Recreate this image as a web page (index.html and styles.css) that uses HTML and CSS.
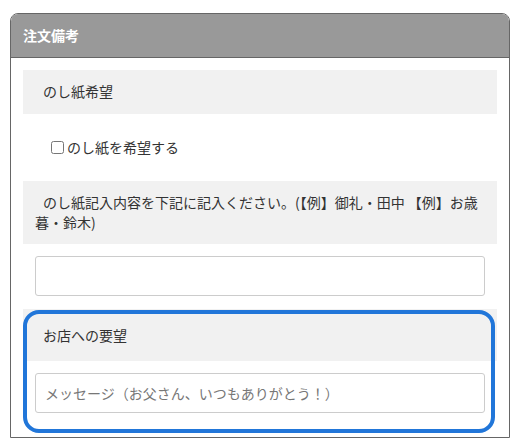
FILE: index.html
```html
<!DOCTYPE html>
<html lang="ja">
<head>
    <meta charset="UTF-8">
    <title>注文備考</title>
    <link rel="stylesheet" href="styles.css">
</head>
<body>
    <div class="order-note">
        <div class="note-header">注文備考</div>

        <div class="note-body">
            <!-- のし紙 -->
            <div class="note-section">
                <div class="note-label">のし紙希望</div>
                <div class="check-row">
                    <label><input type="checkbox">のし紙を希望する</label>
                </div>
            </div>

            <div class="note-section">
                <div class="note-label">のし紙記入内容を下記に記入ください。(【例】御礼・田中 【例】お歳暮・鈴木)</div>
                <div class="field-row">
                    <input type="text" class="form-control">
                </div>
            </div>

            <!-- お店への要望 -->
            <div class="note-section highlight">
                <div class="note-label">お店への要望</div>
                <div class="field-row">
                    <input type="text" class="form-control" placeholder="メッセージ（お父さん、いつもありがとう！）">
                </div>
            </div>
        </div>
    </div>
</body>
</html>
```

FILE: styles.css
```css
:root {
    --header-color: #999999;
    --band-color: #f1f1f1;
    --text-color: #333333;
    --mark-color: #2176d9;
}

* {
    margin: 0;
    padding: 0;
    box-sizing: border-box;
}

body {
    font-family: "Noto Sans CJK JP", "Noto Sans", sans-serif;
    font-size: 14px;
    line-height: 1.4;
    color: var(--text-color);
    background-color: white;
    padding: 13px 6px 0 10px;
}

.order-note {
    width: 500px;
    border: 1px solid #666666;
    border-radius: 8px 8px 0 0;
    overflow: hidden;
}

.note-header {
    background-color: var(--header-color);
    color: white;
    font-weight: bold;
    height: 44px;
    padding: 0 12px;
    display: flex;
    align-items: center;
    border-bottom: 1px solid #666666;
}

.note-body {
    padding: 12px 12px 12px;
}

.note-section {
    position: relative;
}

.note-label {
    background-color: var(--band-color);
    padding: 12px 12px;
    text-indent: 8px;
}

.check-row {
    padding: 24px 0 24px 24px;
}

.check-row label {
    display: flex;
    align-items: center;
}

.check-row input {
    width: 13px;
    height: 13px;
    margin: 0 3px 0 4px;
}

.field-row {
    padding: 12px 12px 13px;
}

.form-control {
    display: block;
    width: 100%;
    height: 40px;
    padding: 0 9px;
    border: 1px solid #cccccc;
    border-radius: 3px;
    font-family: inherit;
    font-size: 14px;
    color: var(--text-color);
}

.form-control::placeholder {
    color: #777777;
}

.highlight .note-label {
    padding: 17px 12px 15px;
}

.highlight .field-row {
    padding-bottom: 12px;
}

/* annotation frame around the shop request block */
.highlight::after {
    content: "";
    position: absolute;
    top: 1px;
    left: 0;
    right: 2px;
    bottom: -8px;
    border: 4px solid var(--mark-color);
    border-radius: 16px;
    pointer-events: none;
}
```
